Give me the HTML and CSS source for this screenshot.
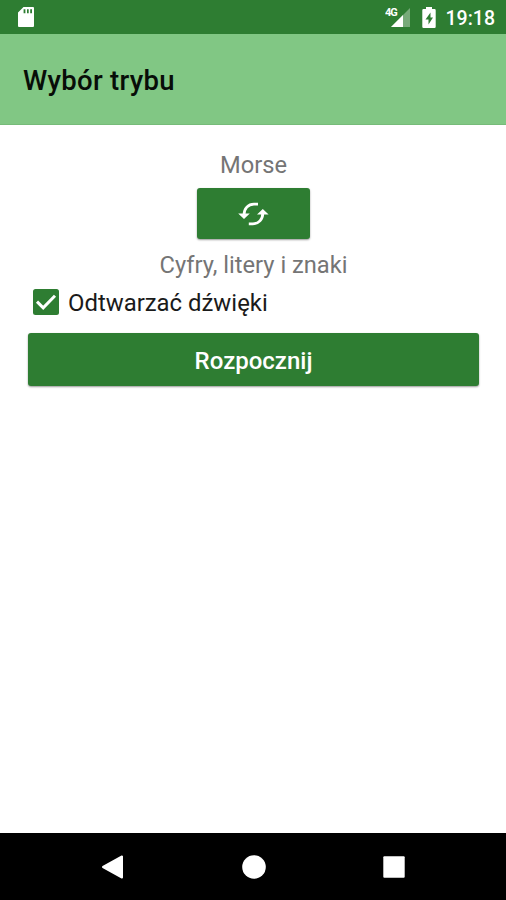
FILE: index.html
```html
<!DOCTYPE html>
<html lang="pl">
<head>
  <meta charset="UTF-8">
  <meta name="viewport" content="width=device-width, initial-scale=1.0">
  <title>Wybór trybu</title>
  <link rel="stylesheet" href="styles.css">
</head>
<body>
  <div class="status_bar">
    <svg class="sd_card" viewBox="0 0 16 20"><path fill="#fff" fill-rule="evenodd" d="M5.500 0H15q1 0 1 1v18q0 1-1 1H1q-1 0-1-1V5.500zM5.600 2.200v4h1.800v-4zM9 2.200v4h1.700v-4zM12.200 2.200v4H14v-4z"/></svg>
    <div class="status_icons">
      <svg class="signal" viewBox="0 0 26 22">
        <path fill="#fff" fill-opacity=".35" d="M25 2v19H6z"/>
        <path fill="#fff" d="M18 9v12H6z"/>
        <text x="0" y="10">4G</text>
      </svg>
      <svg class="battery" viewBox="0 0 14 21"><path fill="#fff" fill-rule="evenodd" d="M4 0h6v2h2.500q1.200 0 1.200 1.200v16.600q0 1.200-1.200 1.200h-11q-1.200 0-1.200-1.200V3.200Q.3 2 1.500 2H4zM8.500 5.500L3.500 12.500h3v5l4.500-7H8.500z"/></svg>
      <span class="clock">19:18</span>
    </div>
  </div>

  <header>
    <h1>Wybór trybu</h1>
  </header>

  <main>
    <p class="mode">Morse</p>
    <button type="button" class="button_swap" aria-label="Zamień">
      <svg viewBox="0 0 34 34">
        <path fill="none" stroke="#fff" stroke-width="2.800" d="M8 18C8 11.500 12.200 7.200 18 7.200H22M26.800 16C26.800 22.500 22.600 26.800 16.800 26.800H12.800"/>
        <path fill="#fff" d="M2.200 16.500h11.600l-5.800 5.500zM21 17.500h11.600l-5.800-5.500z"/>
      </svg>
    </button>
    <p class="mode">Cyfry, litery i znaki</p>
    <label class="sound">
      <input type="checkbox" checked>
      <svg class="check" viewBox="0 0 26 26"><rect width="26" height="26" rx="2.500" fill="#2e7d32"/><path d="M4 12.600l6.200 6.200L22 6.800" fill="none" stroke="#fff" stroke-width="3"/></svg>
      <span>Odtwarzać dźwięki</span>
    </label>
    <button type="button" class="button_start">Rozpocznij</button>
  </main>

  <nav>
    <svg viewBox="0 0 26 26"><path fill="#fff" stroke="#fff" stroke-width="2" stroke-linejoin="round" d="M22 2.500v21L3 13z"/></svg>
    <svg viewBox="0 0 26 26"><circle cx="13" cy="13" r="11.800" fill="#fff"/></svg>
    <svg viewBox="0 0 26 26"><rect x="2.300" y="2.300" width="21.400" height="21.400" rx="1" fill="#fff"/></svg>
  </nav>
</body>
</html>
```
FILE: styles.css
```css
* {
  box-sizing: border-box;
  padding: 0;
  margin: 0;
}

body {
  display: flex;
  flex-direction: column;
  height: 100vh;
  background-color: white;
  font-family: Roboto, sans-serif;
  overflow: hidden;
}

svg {
  display: block;
  flex: none;
}

.status_bar {
  display: flex;
  justify-content: space-between;
  align-items: center;
  height: 34px;
  padding: 0 11px 0 18px;
  background-color: #2e7d32;
}
.sd_card {
  width: 16px;
  height: 20px;
}
.status_icons {
  display: flex;
  align-items: center;
}
.signal {
  width: 26px;
  height: 22px;
  margin-right: 11px;
}
.signal text {
  font-size: 11px;
  font-weight: 700;
  letter-spacing: -1px;
  fill: white;
}
.battery {
  width: 14px;
  height: 21px;
  margin-right: 10px;
}
.clock {
  color: white;
  font-size: 19.5px;
  font-weight: 500;
  line-height: 34px;
  padding-top: 3px;
}

header {
  display: flex;
  align-items: center;
  height: 91px;
  padding: 3px 24px 0 23px;
  background-color: #81c784;
  border-bottom: 1px solid #76bb79;
}
header h1 {
  color: #080d08;
  font-size: 27.5px;
  font-weight: 500;
  letter-spacing: 0.3px;
}

main {
  display: flex;
  flex-direction: column;
  align-items: center;
  flex: 1;
  padding: 24px 28px 0 28px;
}
.mode {
  color: #757575;
  font-size: 23.7px;
  line-height: 32px;
  padding-left: 1px;
}
button {
  border: none;
  border-radius: 3px;
  background-color: #2e7d32;
  box-shadow: 0 1px 2px rgba(0, 0, 0, 0.4);
  color: white;
  font-family: inherit;
  cursor: pointer;
}
.button_swap {
  display: flex;
  align-items: center;
  justify-content: center;
  width: 113px;
  height: 51px;
  margin: 7px 0 10px 0;
}
.button_swap svg {
  width: 34px;
  height: 34px;
}
.sound {
  display: flex;
  align-items: center;
  align-self: flex-start;
  height: 32px;
  margin: 6px 0 14px 5px;
  color: #1a1a1a;
  font-size: 23.9px;
}
.sound input {
  display: none;
}
.check {
  width: 26px;
  height: 26px;
  margin: -2px 9px 0 0;
}
.button_start {
  width: 451px;
  height: 53px;
  padding: 3px 0 0 1px;
  font-size: 24px;
  font-weight: 500;
}

nav {
  display: flex;
  justify-content: center;
  align-items: center;
  gap: 114.5px;
  height: 67px;
  padding-left: 1px;
  background-color: black;
}
nav svg {
  width: 26px;
  height: 26px;
}
```
